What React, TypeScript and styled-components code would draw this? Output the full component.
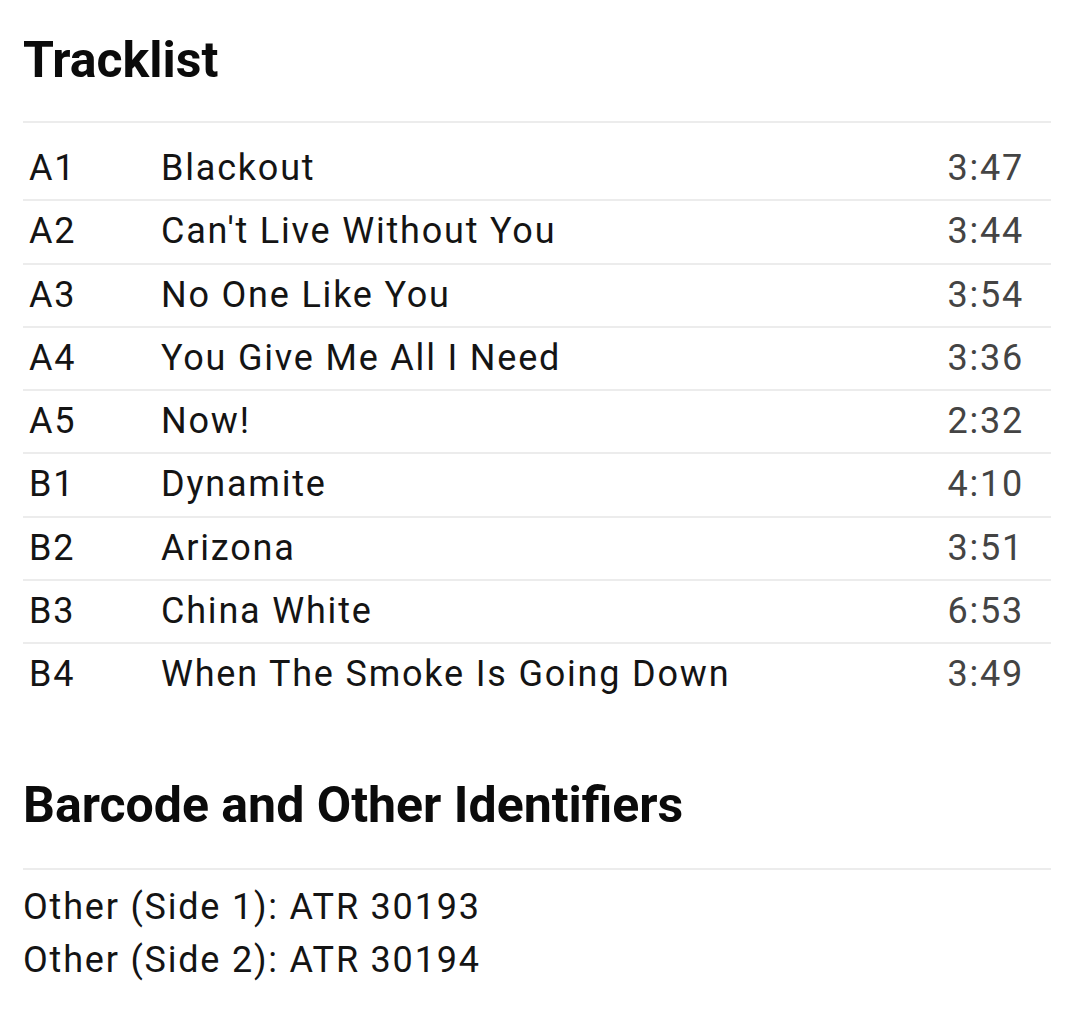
import React from "react";
import styled, { createGlobalStyle } from "styled-components";

const Global = createGlobalStyle`
  html, body { margin: 0; padding: 0; background: #fff; }
  body { font-family: Roboto, "Noto Sans", Arial, sans-serif; color: #111; }
`;

const Page = styled.div`
  padding: 30px 23px 40px 23px;
`;

const Section = styled.section<{ $gap?: number }>`
  margin-top: ${(p) => p.$gap ?? 0}px;
`;

const Heading = styled.h2<{ $after: number }>`
  margin: 0;
  font-size: 50px;
  line-height: 60px;
  font-weight: 700;
  color: #0b0b0b;
  padding-bottom: ${(p) => p.$after}px;
  border-bottom: 2px solid #ececec;
`;

const TrackTable = styled.div`
  margin-top: 15px;
  display: flex;
  flex-direction: column;
`;

const Row = styled.div<{ $last?: boolean }>`
  display: grid;
  grid-template-columns: 132px 1fr auto;
  align-items: center;
  height: 61.3px;
  padding: 0 27px 0 6px;
  font-size: 36px;
  letter-spacing: 1.8px;
  line-height: 61.3px;
  border-bottom: ${(p) => (p.$last ? "none" : "2px solid #ececec")};
`;

const Pos = styled.span`
  color: #141414;
`;

const Title = styled.span`
  color: #141414;
`;

const Duration = styled.span`
  color: #444;
  text-align: right;
`;

const IdList = styled.div`
  margin-top: 11px;
  font-size: 36px;
  letter-spacing: 1.8px;
  line-height: 53px;
  color: #141414;
`;

const tracks: [string, string, string][] = [
  ["A1", "Blackout", "3:47"],
  ["A2", "Can't Live Without You", "3:44"],
  ["A3", "No One Like You", "3:54"],
  ["A4", "You Give Me All I Need", "3:36"],
  ["A5", "Now!", "2:32"],
  ["B1", "Dynamite", "4:10"],
  ["B2", "Arizona", "3:51"],
  ["B3", "China White", "6:53"],
  ["B4", "When The Smoke Is Going Down", "3:49"],
];

export default function App() {
  return (
    <>
      <Global />
      <Page>
        <Section>
          <Heading $after={31}>Tracklist</Heading>
          <TrackTable>
            {tracks.map(([p, t, d], i) => (
              <Row key={p} $last={i === tracks.length - 1}>
                <Pos>{p}</Pos>
                <Title>{t}</Title>
                <Duration>{d}</Duration>
              </Row>
            ))}
          </TrackTable>
        </Section>
        <Section $gap={69}>
          <Heading $after={33}>Barcode and Other Identifiers</Heading>
          <IdList>
            <div>Other (Side 1): ATR 30193</div>
            <div>Other (Side 2): ATR 30194</div>
          </IdList>
        </Section>
      </Page>
    </>
  );
}
